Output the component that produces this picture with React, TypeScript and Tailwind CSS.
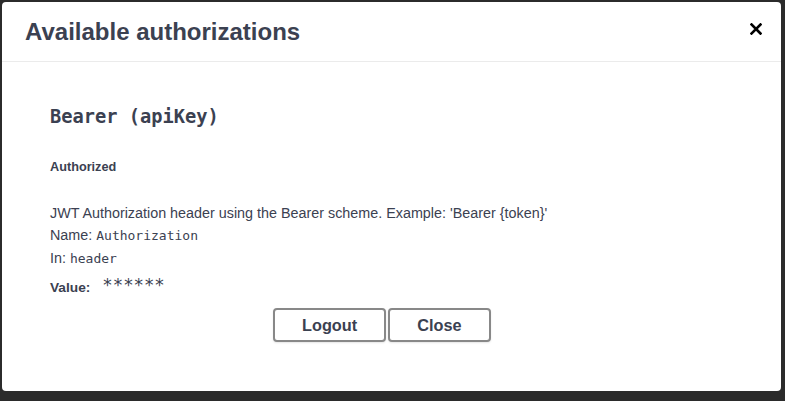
const textColor = "text-[#3b4151]";

const CloseIcon = () => (
  <svg width="12" height="12" viewBox="0 0 12 12" aria-hidden="true">
    <path d="M1.5 1.5 L10.5 10.5 M10.5 1.5 L1.5 10.5" stroke="#000" strokeWidth="2.6" strokeLinecap="square" />
  </svg>
);

const App = () => {
  return (
    <div className="w-[785px] h-[401px] bg-[#2b2b2b] pt-[2px] pl-[2px] font-['Liberation_Sans',Arial,sans-serif]">
      <div className="w-[779px] h-[389px] bg-white rounded-[4px] flex flex-col">
        {/* header */}
        <div className="h-[60px] border-b border-[#ebebeb] flex items-center justify-between pl-[23px] pr-[19px]">
          <h3 className={`text-[24px] font-bold leading-[28px] ${textColor}`}>Available authorizations</h3>
          <button className="w-[12px] h-[12px] flex items-center justify-center -mt-[6px]">
            <CloseIcon />
          </button>
        </div>

        {/* content */}
        <div className={`pl-[48px] ${textColor}`}>
          <h4 className="mt-[43px] h-[24px] leading-[24px] text-[18.7px] font-bold font-['DejaVu_Sans_Mono',monospace]">
            Bearer (apiKey)
          </h4>
          <h6 className="mt-[30px] h-[16px] leading-[16px] text-[12.7px] font-bold">Authorized</h6>
          <div className="mt-[27px] text-[14.35px]">
            <div className="h-[22px] leading-[22px]">
              JWT Authorization header using the Bearer scheme. Example: 'Bearer {"{token}"}'
            </div>
            <div className="h-[23px] leading-[23px]">
              Name: <code className="text-[13px] font-['DejaVu_Sans_Mono',monospace]">Authorization</code>
            </div>
            <div className="h-[23px] leading-[23px]">
              In: <code className="text-[13px] font-['DejaVu_Sans_Mono',monospace]">header</code>
            </div>
          </div>
          <div className="mt-[7px] h-[22px] flex items-center">
            <label className="text-[13.7px] font-bold">Value:</label>
            <code className="ml-[12px] text-[17.3px] leading-[22px] -mt-[6px] font-['DejaVu_Sans_Mono',monospace]">******</code>
          </div>
          <div className="mt-[9px] ml-[223px] flex gap-[2px]">
            <button className="h-[34px] px-[27px] border-2 border-[#888] rounded-[4px] bg-white text-[16.3px] font-bold shadow-[0_1px_2px_rgba(0,0,0,0.1)]">
              Logout
            </button>
            <button className="h-[34px] px-[27px] border-2 border-[#888] rounded-[4px] bg-white text-[16.3px] font-bold shadow-[0_1px_2px_rgba(0,0,0,0.1)]">
              Close
            </button>
          </div>
        </div>
      </div>
    </div>
  );
};

export default App;
